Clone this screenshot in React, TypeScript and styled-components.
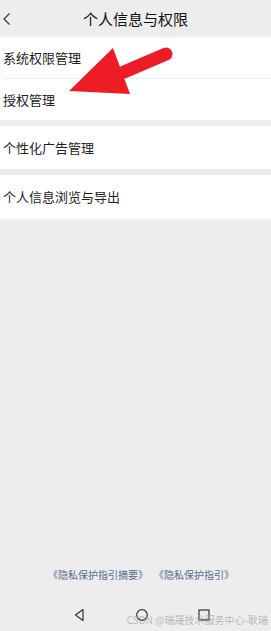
import React from "react";
import styled, { createGlobalStyle } from "styled-components";

const GlobalStyle = createGlobalStyle`
    html, body {
        margin: 0;
        padding: 0;
        background: #ededed;
    }
    * {
        box-sizing: border-box;
    }
`;

const Page = styled.div`
    position: relative;
    display: flex;
    flex-direction: column;
    min-height: 631px;
    background-color: #ededed;
    font-family: "Noto Sans CJK SC", "Noto Sans", sans-serif;
    color: #1a1a1a;
    overflow: hidden;
`;

const Header = styled.div`
    position: relative;
    display: flex;
    align-items: center;
    justify-content: center;
    height: 37px;
`;

const BackButton = styled.div`
    position: absolute;
    left: 2px;
    top: 12px;
    width: 10px;
    height: 14px;
    display: flex;
`;

const Title = styled.div`
    font-size: 15px;
    line-height: 20px;
    color: #111;
`;

const Section = styled.div<{ $gap?: number }>`
    background-color: #ffffff;
    margin-bottom: ${(p) => p.$gap ?? 0}px;
`;

const Row = styled.div<{ $height: number; $divider?: boolean }>`
    position: relative;
    display: flex;
    align-items: center;
    height: ${(p) => p.$height}px;
    padding-left: 3px;
    font-size: 13px;
    line-height: 16px;
    color: #222;
    ${(p) =>
        p.$divider &&
        `
        &::after {
            content: "";
            position: absolute;
            left: 3px;
            right: 0;
            bottom: 0;
            height: 1px;
            background: #efefef;
        }
    `}
`;

const Spacer = styled.div`
    flex: 1;
`;

const Links = styled.div`
    display: flex;
    justify-content: center;
    gap: 6px;
    padding-left: 11px;
    font-size: 10px;
    line-height: 14px;
    color: #576b95;
    margin-bottom: 18px;
`;

const NavBar = styled.div`
    display: flex;
    align-items: center;
    justify-content: center;
    gap: 48px;
    height: 31px;
    padding-left: 12px;
    padding-bottom: 2px;
`;

const NavIcon = styled.svg`
    width: 14px;
    height: 14px;
    display: block;
`;

const Watermark = styled.div`
    position: absolute;
    right: 3px;
    bottom: 5px;
    font-size: 10px;
    line-height: 12px;
    color: rgba(160, 160, 160, 0.7);
    white-space: nowrap;
`;

const Arrow = styled.svg`
    position: absolute;
    left: 0;
    top: 0;
    width: 271px;
    height: 120px;
    pointer-events: none;
`;

const App = () => {
    return (
        <Page>
            <GlobalStyle />
            <Header>
                <BackButton>
                    <svg width="10" height="14" viewBox="0 0 10 14">
                        <path
                            d="M7.5 1.5 L2 7 L7.5 12.5"
                            fill="none"
                            stroke="#333"
                            strokeWidth="1.2"
                        />
                    </svg>
                </BackButton>
                <Title>个人信息与权限</Title>
            </Header>
            <Section $gap={6}>
                <Row $height={42} $divider>
                    系统权限管理
                </Row>
                <Row $height={41}>授权管理</Row>
            </Section>
            <Section $gap={6}>
                <Row $height={43}>个性化广告管理</Row>
            </Section>
            <Section>
                <Row $height={44}>个人信息浏览与导出</Row>
            </Section>
            <Spacer />
            <Links>
                <span>《隐私保护指引摘要》</span>
                <span>《隐私保护指引》</span>
            </Links>
            <NavBar>
                <NavIcon viewBox="0 0 14 14">
                    <path
                        d="M10 1.5 L2.5 7 L10 12.5 Z"
                        fill="none"
                        stroke="#333"
                        strokeWidth="1.2"
                        strokeLinejoin="round"
                    />
                </NavIcon>
                <NavIcon viewBox="0 0 14 14">
                    <circle cx="7" cy="7" r="5.3" fill="none" stroke="#333" strokeWidth="1.2" />
                </NavIcon>
                <NavIcon viewBox="0 0 14 14">
                    <rect x="2" y="2" width="10" height="10" fill="none" stroke="#333" strokeWidth="1.2" />
                </NavIcon>
            </NavBar>
            <Watermark>CSDN @瑞晟技术服务中心-耿瑞</Watermark>
            <Arrow viewBox="0 0 271 120">
                <line
                    x1="124"
                    y1="72"
                    x2="166"
                    y2="54"
                    stroke="#ee1c25"
                    strokeWidth="13"
                    strokeLinecap="round"
                />
                <polygon points="69,91 113,48 130,94" fill="#ee1c25" />
            </Arrow>
        </Page>
    );
};

export default App;
